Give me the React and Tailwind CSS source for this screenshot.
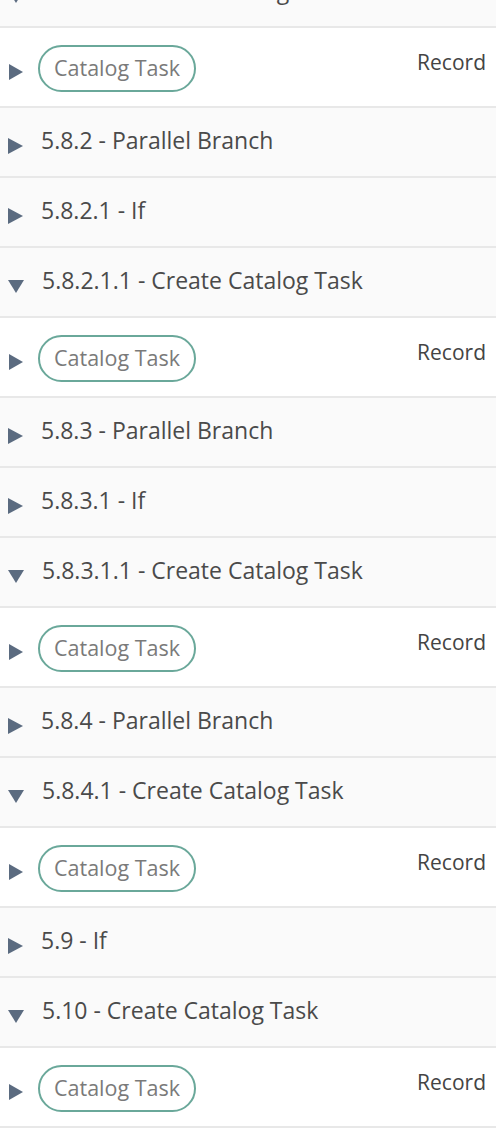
import React from "react";

const rows = [
  { t: "h", open: true, label: "5.8.1.1 - Create Catalog Task" },
  { t: "task" },
  { t: "h", label: "5.8.2 - Parallel Branch" },
  { t: "h", label: "5.8.2.1 - If" },
  { t: "h", open: true, label: "5.8.2.1.1 - Create Catalog Task" },
  { t: "task" },
  { t: "h", label: "5.8.3 - Parallel Branch" },
  { t: "h", label: "5.8.3.1 - If" },
  { t: "h", open: true, label: "5.8.3.1.1 - Create Catalog Task" },
  { t: "task" },
  { t: "h", label: "5.8.4 - Parallel Branch" },
  { t: "h", open: true, label: "5.8.4.1 - Create Catalog Task" },
  { t: "task" },
  { t: "h", label: "5.9 - If" },
  { t: "h", open: true, label: "5.10 - Create Catalog Task" },
  { t: "task" },
];

function Right() {
  return (
    <svg width="15" height="16" viewBox="0 0 15 16" className="shrink-0 mt-[8px]">
      <polygon points="0,0 15,8 0,16" fill="#5b6b80" />
    </svg>
  );
}
function Down() {
  return (
    <svg width="16" height="13" viewBox="0 0 16 13" className="shrink-0 mt-[8px]">
      <polygon points="0,0 16,0 8,13" fill="#5b6b80" />
    </svg>
  );
}

export default function App() {
  return (
    <div
      className="w-[496px] overflow-hidden bg-white"
      style={{ fontFamily: "'Open Sans', sans-serif" }}
    >
      <div className="-mt-[42px]">
        {rows.map((r, i) =>
          r.t === "h" ? (
            <div
              key={i}
              className="h-[70px] bg-[#fafafa] border-b-2 border-[#e8e8e8] flex items-center pl-[8px] gap-[18px]"
            >
              {r.open ? <Down /> : <Right />}
              <span className="text-[23px] text-[#4a4a4a] leading-none mb-[4px]">{r.label}</span>
            </div>
          ) : (
            <div
              key={i}
              className="h-[80px] bg-white border-b-2 border-[#e8e8e8] flex items-start pl-[9px] pr-[10px] pt-[17px]"
            >
              <div className="h-[47px] flex items-center">
                <svg width="14" height="16" viewBox="0 0 14 16" className="shrink-0 mt-[6px]">
                  <polygon points="0,0 14,8 0,16" fill="#5b6b80" />
                </svg>
              </div>
              <div className="ml-[15px] h-[47px] px-[14px] rounded-full border-2 border-[#6aa89a] flex items-center text-[21.5px] text-[#7a7a7a]">
                Catalog Task
              </div>
              <div className="ml-auto mt-[2px] text-[21px] text-[#444444]">Record</div>
            </div>
          )
        )}
      </div>
    </div>
  );
}
